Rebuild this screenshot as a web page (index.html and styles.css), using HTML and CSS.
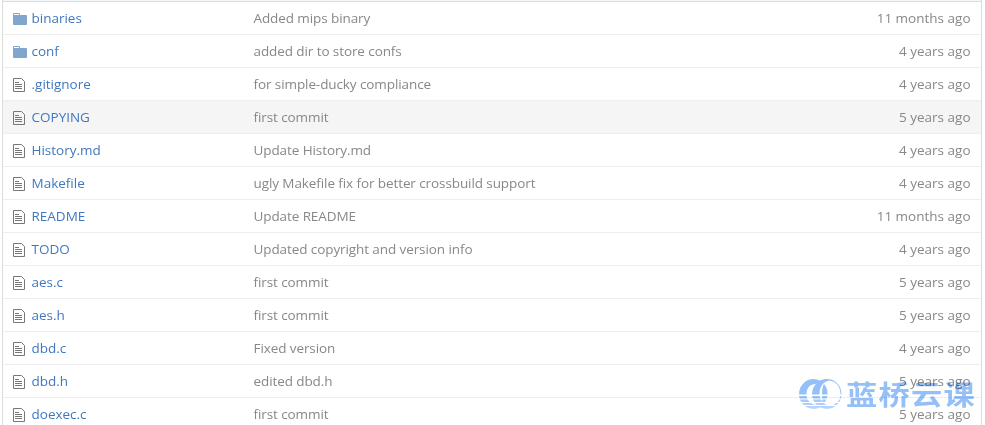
FILE: index.html
```
<!DOCTYPE html>
<html lang="en">
<head>
<meta charset="utf-8">
<title>Files</title>
<link rel="stylesheet" href="styles.css">
</head>
<body>
<svg class="defs" aria-hidden="true">
  <symbol id="folder" viewBox="0 0 14 12"><path fill="#80a6cd" fill-rule="evenodd" d="M0 1Q0 0 1 0H6Q7 0 7 1V2H13Q14 2 14 3V11Q14 12 13 12H1Q0 12 0 11ZM1 1V2H6V1Z"/></symbol>
  <symbol id="file" viewBox="0 0 12 14"><path fill="none" stroke="#777" d="M.5.5H8.5L11.500 3.500V13.500H.5ZM2 4.500H6M2 6.500H9M2 8.500H9M2 10.500H9"/></symbol>
</svg>
<main class="files" id="files"></main>
<div class="watermark">
  <svg class="logo" viewBox="0 0 43 30">
    <defs>
      <linearGradient id="fade" x1="0" y1="0" x2="0" y2="30" gradientUnits="userSpaceOnUse"><stop offset=".5" stop-color="#8fbcf7"/><stop offset="1" stop-color="#b7d5fb"/></linearGradient>
      <clipPath id="bands"><path d="M0 0H43V15.500H0ZM0 17H43V19.500H0ZM0 20.500H43V23H0ZM0 24H43V26H0ZM0 27H43V30H0Z"/></clipPath>
    </defs>
    <g clip-path="url(#bands)" fill="url(#fade)">
      <path d="M22 2Q18 0 14.500 0A14.500 15 0 0 0 14.500 30Q18 30 22 28L20 26C11 26 7.500 21 7.500 15C7.500 9 11 5 17 5Z"/>
      <path d="M25 5C28 8 28.500 12 28.500 15S27 23 24 26Q22.500 20 23 15Q23 8 25 5Z"/>
      <path d="M28 0A15 15 0 0 0 13 15A15 15 0 0 0 28 30A14.500 15 0 0 0 28 0ZM30 1.500C37 2 41.500 8 41.500 15S37 26 30 27C24 25 20.500 20 20.500 15C20.500 8 24 3 30 1.500Z" fill-rule="evenodd"/>
    </g>
  </svg>
  <span class="brand" lang="zh-CN">蓝桥云课</span>
</div>
<script src="script.js"></script>
</body>
</html>
```
FILE: styles.css
```
body {
  margin: 0;
  height: 425px;
  overflow: hidden;
  background: #fff;
  font: 13.5px/20px "Open Sans", "Noto Sans", sans-serif;
  color: #888;
}
.defs { display: none; }
.files {
  margin: 0 3px 0 2px;
  padding-top: 1px;
  border-left: 1px solid #ddd;
  border-right: 1px solid #ddd;
  background: linear-gradient(#f2f8fb 1px, transparent 1px);
}
.row {
  display: grid;
  grid-template-columns: 18.5px 222px 1fr auto;
  align-items: center;
  box-sizing: border-box;
  height: 33px;
  padding: 0 10.500px 0 10px;
  border-top: 1px solid #eee;
  white-space: nowrap;
}
.row:first-child { border-top-color: #c9e3f1; }
.row.active { background: #f5f5f5; }
.name { color: #4078c0; }
.message { letter-spacing: -.09px; }
.icon { display: block; }
.icon.folder { width: 14px; height: 12px; margin-top: 1px; }
.icon.file { width: 12px; height: 14px; margin-top: 2px; }
.watermark {
  position: absolute;
  left: 799px;
  top: 376px;
  display: flex;
  align-items: center;
  height: 36px;
  opacity: .95;
  mix-blend-mode: multiply;
}
.logo { width: 43px; height: 30px; }
.brand {
  margin-left: 4px;
  font: 700 27px/36px "Noto Sans CJK SC", sans-serif;
  letter-spacing: 1px;
  color: #8fbcf7;
  transform: scaleX(1.16);
  transform-origin: left;
}
```
FILE: script.js
```
const files = [
  ["folder", "binaries", "Added mips binary", "11 months ago"],
  ["folder", "conf", "added dir to store confs", "4 years ago"],
  ["file", ".gitignore", "for simple-ducky compliance", "4 years ago"],
  ["file", "COPYING", "first commit", "5 years ago"],
  ["file", "History.md", "Update History.md", "4 years ago"],
  ["file", "Makefile", "ugly Makefile fix for better crossbuild support", "4 years ago"],
  ["file", "README", "Update README", "11 months ago"],
  ["file", "TODO", "Updated copyright and version info", "4 years ago"],
  ["file", "aes.c", "first commit", "5 years ago"],
  ["file", "aes.h", "first commit", "5 years ago"],
  ["file", "dbd.c", "Fixed version", "4 years ago"],
  ["file", "dbd.h", "edited dbd.h", "5 years ago"],
  ["file", "doexec.c", "first commit", "5 years ago"]
];
document.getElementById("files").innerHTML = files.map(([icon, name, message, age]) => `
  <div class="row${name === "COPYING" ? " active" : ""}">
    <svg class="icon ${icon}"><use href="#${icon}"/></svg>
    <span class="name">${name}</span>
    <span class="message">${message}</span>
    <span class="age">${age}</span>
  </div>`).join("");
```
